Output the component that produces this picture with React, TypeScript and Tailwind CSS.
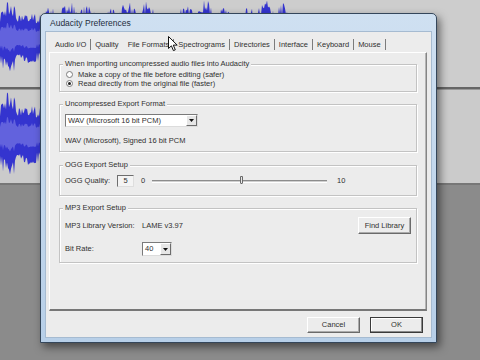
import type { ReactNode } from 'react';

function Wave({ w, h }: { w: number; h: number }) {
  const mid = h / 2;
  const top: string[] = [];
  const bot: string[] = [];
  const itop: string[] = [];
  const ibot: string[] = [];
  for (let x = 0; x <= w; x++) {
    const n1 = Math.abs(Math.sin(x * 127.1 + 311.7) * 43758.5453) % 1;
    const n2 = Math.abs(Math.sin(x * 269.5 + 183.3) * 43758.5453) % 1;
    const env = 0.6 + 0.4 * Math.abs(Math.sin(x * 0.16) * Math.cos(x * 0.047));
    const a1 = mid * Math.min(0.99, env * (0.62 + 0.42 * n1));
    const a2 = mid * Math.min(0.99, env * (0.62 + 0.42 * n2));
    top.push(`${x},${(mid - a1).toFixed(1)}`);
    bot.unshift(`${x},${(mid + a2).toFixed(1)}`);
    itop.push(`${x},${(mid - a1 * 0.42).toFixed(1)}`);
    ibot.unshift(`${x},${(mid + a2 * 0.42).toFixed(1)}`);
  }
  return (
    <svg width={w} height={h} className="block">
      <polygon points={[...top, ...bot].join(' ')} fill="#3434cf" />
      <polygon points={[...itop, ...ibot].join(' ')} fill="#6262dd" />
    </svg>
  );
}

function Group({ title, className, children }: { title: string; className: string; children: ReactNode }) {
  return (
    <div className={`relative border border-[#c3c3c3] shadow-[1px_1px_0_#fff,inset_1px_1px_0_#fff] pl-[5px] pr-[5px] ${className}`}>
      <span className="absolute left-[3px] top-[-6px] px-[2px] bg-[#ececec] leading-[10px] whitespace-nowrap">{title}</span>
      {children}
    </div>
  );
}

function Radio({ checked, label }: { checked?: boolean; label: string }) {
  return (
    <div className="flex items-center h-[9px]">
      <span className="ml-[1px] w-[7px] h-[7px] rounded-full border border-[#7d7d7d] bg-white flex items-center justify-center">
        {checked && <span className="w-[3px] h-[3px] rounded-full bg-[#222]" />}
      </span>
      <span className="ml-[5px] leading-[9px]">{label}</span>
    </div>
  );
}

function Combo({ value, width, height }: { value: string; width: string; height: string }) {
  return (
    <div className={`flex items-center bg-white border border-t-[#7a7a7a] border-l-[#7a7a7a] border-r-[#dcdcdc] border-b-[#dcdcdc] ${width} ${height}`}>
      <span className="flex-1 pl-[2px] leading-[10px] whitespace-nowrap">{value}</span>
      <span className="w-[11px] h-full bg-[#e6e6e6] border border-t-[#fff] border-l-[#fff] border-r-[#6c6c6c] border-b-[#6c6c6c] flex items-center justify-center">
        <svg width="5" height="3" viewBox="0 0 5 3">
          <path d="M0 0 H5 L2.5 3 Z" fill="#111" />
        </svg>
      </span>
    </div>
  );
}

function Btn({ label, def, className = '' }: { label: string; def?: boolean; className?: string }) {
  return (
    <button
      className={`flex items-center justify-center bg-[#ececec] border leading-[10px] ${
        def
          ? 'border-[#3a3a3a] shadow-[inset_-1px_-1px_0_#8a8a8a,inset_1px_1px_0_#fff]'
          : 'border-t-[#fff] border-l-[#fff] border-r-[#6a6a6a] border-b-[#6a6a6a] shadow-[inset_-1px_-1px_0_#ababab]'
      } ${className}`}
    >
      {label}
    </button>
  );
}

const tabs = ['Audio I/O', 'Quality', 'File Formats', 'Spectrograms', 'Directories', 'Interface', 'Keyboard', 'Mouse'];

export default function App() {
  return (
    <div className="relative w-[480px] h-[360px] overflow-hidden bg-[#8b8b8b] font-['Liberation_Sans',Arial,sans-serif] text-[7.5px] text-[#303030]">
      {/* Audacity project window behind the dialog */}
      <div className="flex flex-col">
        <div className="h-[87px] bg-[#cdcdcd]">
          <Wave w={300} h={76} />
        </div>
        <div className="h-[3px] bg-[#666] border-b border-[#999]" />
        <div className="h-[93px] bg-[#cbcbcb]">
          <Wave w={300} h={90} />
        </div>
        <div className="h-[2px] bg-[#777]" />
      </div>

      {/* Preferences dialog */}
      <div className="absolute left-[40px] top-[13px] w-[397px] h-[330px] flex flex-col rounded-t-[5px] border border-[#34465a] bg-gradient-to-b from-[#cfe0f1] to-[#b7cfe8] shadow-[3px_4px_8px_rgba(0,0,0,0.5)] px-[5px] pb-[5px]">
        <div className="h-[18px] flex items-center pl-[4px] text-[8.5px] text-[#1f2e3e]">Audacity Preferences</div>
        <div className="flex-1 bg-[#ececec] shadow-[0_0_0_1px_#a6bbd1] flex flex-col pl-[3px] pt-[6px]">
          {/* tabs */}
          <div className="h-[14px] pl-[2px] pb-[1px] flex items-center">
            {tabs.map((t) => (
              <div key={t} className="flex items-center">
                <span className="px-[4px] whitespace-nowrap leading-[10px]">{t}</span>
                <span className={`w-[1px] h-[11px] ${t === 'Quality' ? 'bg-transparent' : 'bg-[#7c7c7c]'}`} />
              </div>
            ))}
          </div>

          {/* tab page */}
          <div className="w-[378px] h-[259px] border border-t-[#fff] border-l-[#fff] border-r-[#858585] border-b-[#777] border-b-2 shadow-[inset_-1px_0_0_#b5b5b5] px-[9px] flex flex-col">
            <Group title="When importing uncompressed audio files into Audacity" className="mt-[11px] h-[28px] pt-[5px]">
              <Radio label="Make a copy of the file before editing (safer)" />
              <Radio checked label="Read directly from the original file (faster)" />
            </Group>

            <Group title="Uncompressed Export Format" className="mt-[12px] h-[48px] pt-[9px]">
              <Combo value="WAV (Microsoft 16 bit PCM)" width="w-[133px]" height="h-[13px]" />
              <div className="mt-[9px] h-[10px] leading-[10px]">WAV (Microsoft), Signed 16 bit PCM</div>
            </Group>

            <Group title="OGG Export Setup" className="mt-[13px] h-[31px] pt-[8px]">
              <div className="flex items-center h-[14px]">
                <span className="w-[52px] leading-[10px]">OGG Quality:</span>
                <span className="w-[17px] h-[12px] bg-[#f4f4f4] border border-t-[#6e6e6e] border-l-[#6e6e6e] border-r-[#dedede] border-b-[#dedede] flex items-center justify-center leading-[10px]">5</span>
                <span className="ml-[7px] w-[4px] leading-[10px]">0</span>
                <div className="relative ml-[7px] w-[175px] h-[3px] border-t border-[#8c8c8c] border-b border-b-[#fff] bg-[#cfcfcf]">
                  <div className="absolute left-[88px] top-[-5px] w-[3px] h-[8px] bg-[#e8e8e8] border border-[#6a6a6a] rounded-b-[1px]" />
                </div>
                <span className="ml-[10px] leading-[10px]">10</span>
              </div>
            </Group>

            <Group title="MP3 Export Setup" className="mt-[12px] h-[55px] pt-[8px]">
              <div className="flex items-center h-[17px]">
                <span className="w-[77px] leading-[10px]">MP3 Library Version:</span>
                <span className="flex-1 leading-[10px]">LAME v3.97</span>
                <Btn label="Find Library" className="w-[53px] h-[17px]" />
              </div>
              <div className="mt-[8px] flex items-center h-[14px]">
                <span className="w-[77px] leading-[10px]">Bit Rate:</span>
                <Combo value="40" width="w-[30px]" height="h-[14px]" />
              </div>
            </Group>
          </div>

          {/* dialog buttons */}
          <div className="mt-[6px] w-[378px] pr-[4px] flex justify-end gap-[10px]">
            <Btn label="Cancel" className="w-[53px] h-[16px]" />
            <Btn label="OK" def className="w-[53px] h-[16px]" />
          </div>
        </div>
      </div>

      {/* mouse pointer */}
      <svg className="absolute left-[168px] top-[36px]" width="10" height="16" viewBox="0 0 10 16">
        <path d="M0.5 0.5 V12.5 L3.4 9.8 L5.4 14.6 L7.3 13.8 L5.3 9.1 L9.2 9.1 Z" fill="#fff" stroke="#111" strokeWidth="1" strokeLinejoin="round" />
      </svg>
    </div>
  );
}
